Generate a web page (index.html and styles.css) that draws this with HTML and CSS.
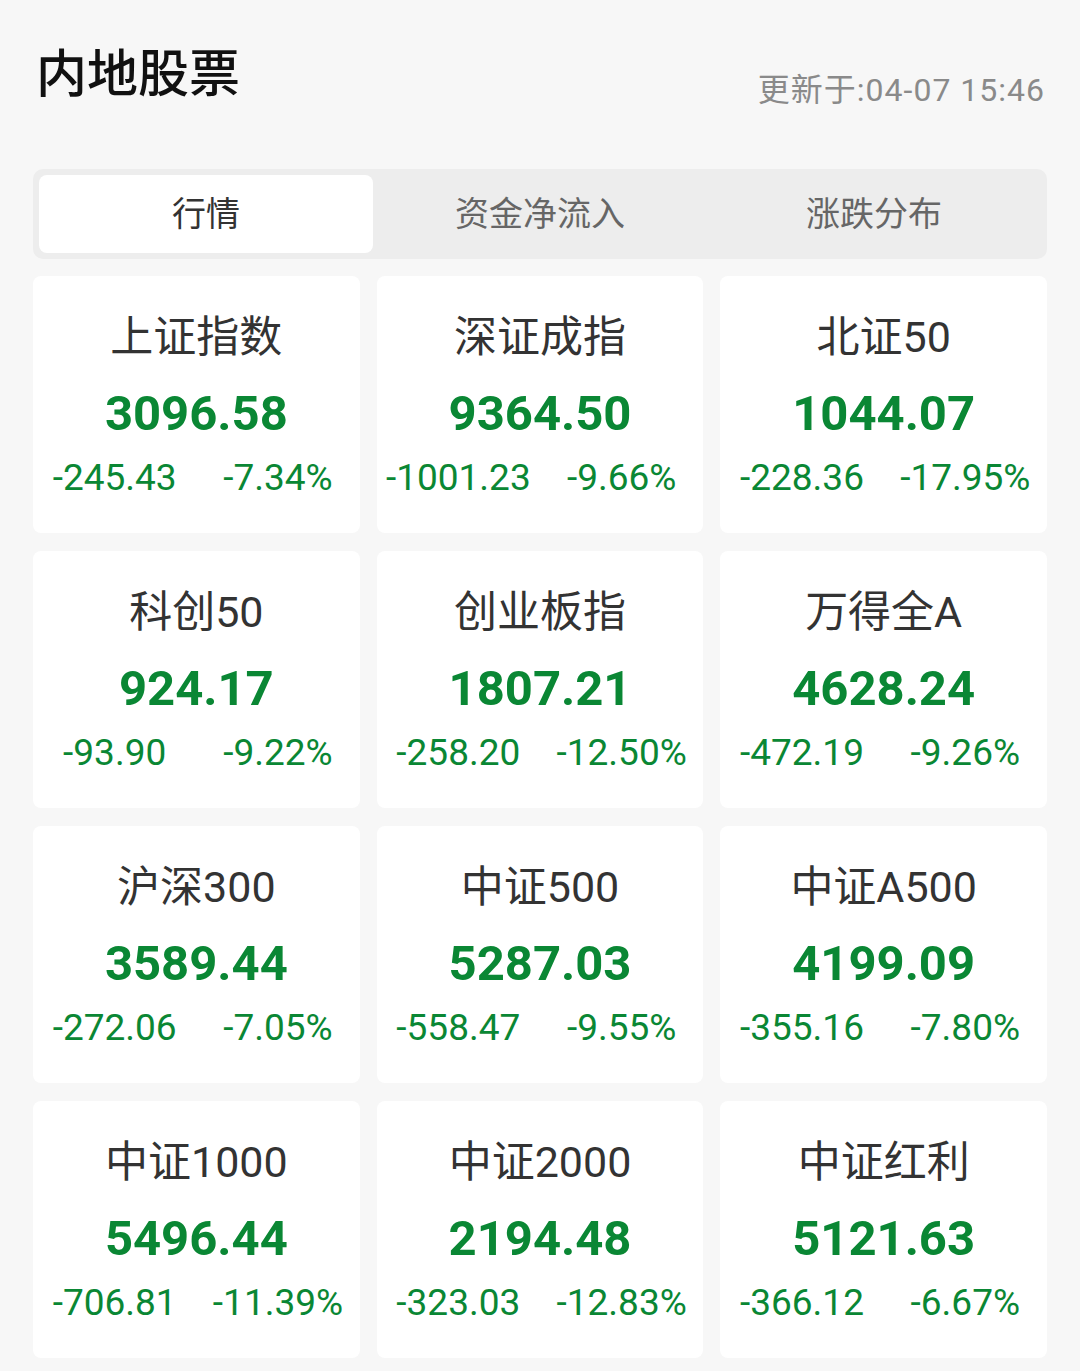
FILE: index.html
```html
<!DOCTYPE html>
<html lang="zh-CN">
<head>
    <meta charset="UTF-8">
    <meta name="viewport" content="width=device-width, initial-scale=1.0">
    <title>内地股票</title>
    <link rel="stylesheet" href="styles.css">
</head>
<body>
    <div class="page">
        <div class="header">
            <h1 class="title">内地股票</h1>
            <span class="updated">更新于:04-07 15:46</span>
        </div>

        <div class="tabs">
            <div class="tab active">行情</div>
            <div class="tab">资金净流入</div>
            <div class="tab">涨跌分布</div>
        </div>

        <div class="grid">
            <div class="card">
                <div class="name">上证指数</div>
                <div class="value">3096.58</div>
                <div class="change"><span>-245.43</span><span>-7.34%</span></div>
            </div>
            <div class="card">
                <div class="name">深证成指</div>
                <div class="value">9364.50</div>
                <div class="change"><span>-1001.23</span><span>-9.66%</span></div>
            </div>
            <div class="card">
                <div class="name">北证50</div>
                <div class="value">1044.07</div>
                <div class="change"><span>-228.36</span><span>-17.95%</span></div>
            </div>
            <div class="card">
                <div class="name">科创50</div>
                <div class="value">924.17</div>
                <div class="change"><span>-93.90</span><span>-9.22%</span></div>
            </div>
            <div class="card">
                <div class="name">创业板指</div>
                <div class="value">1807.21</div>
                <div class="change"><span>-258.20</span><span>-12.50%</span></div>
            </div>
            <div class="card">
                <div class="name">万得全A</div>
                <div class="value">4628.24</div>
                <div class="change"><span>-472.19</span><span>-9.26%</span></div>
            </div>
            <div class="card">
                <div class="name">沪深300</div>
                <div class="value">3589.44</div>
                <div class="change"><span>-272.06</span><span>-7.05%</span></div>
            </div>
            <div class="card">
                <div class="name">中证500</div>
                <div class="value">5287.03</div>
                <div class="change"><span>-558.47</span><span>-9.55%</span></div>
            </div>
            <div class="card">
                <div class="name">中证A500</div>
                <div class="value">4199.09</div>
                <div class="change"><span>-355.16</span><span>-7.80%</span></div>
            </div>
            <div class="card">
                <div class="name">中证1000</div>
                <div class="value">5496.44</div>
                <div class="change"><span>-706.81</span><span>-11.39%</span></div>
            </div>
            <div class="card">
                <div class="name">中证2000</div>
                <div class="value">2194.48</div>
                <div class="change"><span>-323.03</span><span>-12.83%</span></div>
            </div>
            <div class="card">
                <div class="name">中证红利</div>
                <div class="value">5121.63</div>
                <div class="change"><span>-366.12</span><span>-6.67%</span></div>
            </div>
        </div>
    </div>
</body>
</html>
```

FILE: styles.css
```css
/* General Styles */
* {
    margin: 0;
    padding: 0;
    box-sizing: border-box;
    font-family: Roboto, "Noto Sans CJK SC", sans-serif;
}

body {
    background-color: #f7f7f7;
    color: #333;
}

.page {
    width: 1080px;
    height: 1371px;
    padding: 0 33px;
    overflow: hidden;
}

/* Header */
.header {
    display: flex;
    justify-content: space-between;
    align-items: flex-start;
    height: 169px;
    padding: 44px 2px 0 3px;
}

.title {
    font-size: 51px;
    font-weight: 500;
    line-height: 62px;
    color: #111;
}

.updated {
    font-size: 32px;
    letter-spacing: 1px;
    color: #8a8a8a;
    line-height: 40px;
    margin-top: 26px;
}

/* Tabs */
.tabs {
    display: flex;
    padding: 6px;
    background-color: #ededed;
    border-radius: 10px;
}

.tab {
    flex: 1;
    height: 78px;
    line-height: 78px;
    text-align: center;
    font-size: 34px;
    color: #666;
    border-radius: 8px;
}

.tab.active {
    background-color: #fff;
    color: #333;
}

/* Cards */
.grid {
    display: grid;
    grid-template-columns: repeat(3, 1fr);
    column-gap: 17px;
    row-gap: 18px;
    margin-top: 17px;
}

.card {
    height: 257px;
    padding-top: 36px;
    background-color: #fff;
    border-radius: 8px;
    text-align: center;
}

.name {
    font-size: 43px;
    line-height: 50px;
    color: #333;
}

.value {
    margin-top: 22px;
    font-size: 49px;
    font-weight: 700;
    line-height: 60px;
    color: #0a8734;
}

.change {
    display: grid;
    grid-template-columns: 1fr 1fr;
    margin-top: 12px;
    font-size: 37px;
    line-height: 44px;
    color: #0a8734;
}
```
